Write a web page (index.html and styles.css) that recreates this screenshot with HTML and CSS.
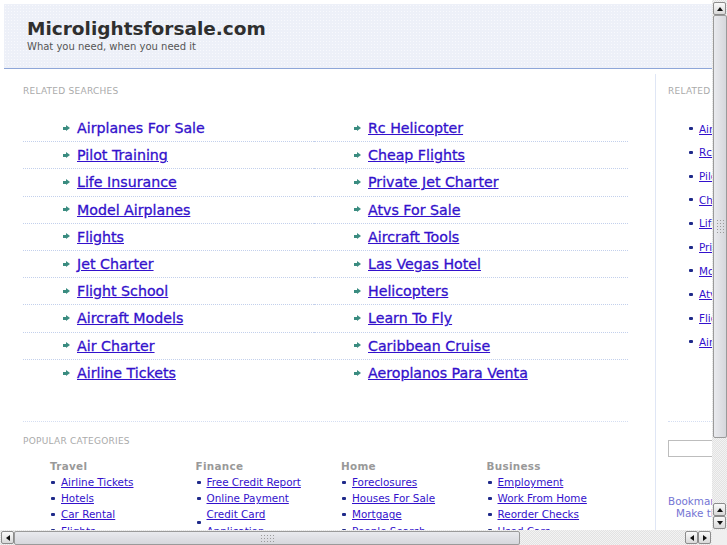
FILE: index.html
```html
<!DOCTYPE html>
<html lang="en">
<head>
  <meta charset="UTF-8" />
  <title>Microlightsforsale.com</title>
  <link rel="stylesheet" href="styles.css">
</head>
<body>
  <div class="page">
    <div class="header">
      <h1>Microlightsforsale.com</h1>
      <p class="tagline">What you need, when you need it</p>
    </div>

    <div class="main">
      <div class="content">
        <h2 class="label">Related Searches</h2>
        <ul class="related">
          <li><span class="arrow"></span><a href="#" class="hover">Airplanes For Sale</a></li>
          <li><span class="arrow"></span><a href="#">Rc Helicopter</a></li>
          <li><span class="arrow"></span><a href="#">Pilot Training</a></li>
          <li><span class="arrow"></span><a href="#">Cheap Flights</a></li>
          <li><span class="arrow"></span><a href="#">Life Insurance</a></li>
          <li><span class="arrow"></span><a href="#">Private Jet Charter</a></li>
          <li><span class="arrow"></span><a href="#">Model Airplanes</a></li>
          <li><span class="arrow"></span><a href="#">Atvs For Sale</a></li>
          <li><span class="arrow"></span><a href="#">Flights</a></li>
          <li><span class="arrow"></span><a href="#">Aircraft Tools</a></li>
          <li><span class="arrow"></span><a href="#">Jet Charter</a></li>
          <li><span class="arrow"></span><a href="#">Las Vegas Hotel</a></li>
          <li><span class="arrow"></span><a href="#">Flight School</a></li>
          <li><span class="arrow"></span><a href="#">Helicopters</a></li>
          <li><span class="arrow"></span><a href="#">Aircraft Models</a></li>
          <li><span class="arrow"></span><a href="#">Learn To Fly</a></li>
          <li><span class="arrow"></span><a href="#">Air Charter</a></li>
          <li><span class="arrow"></span><a href="#">Caribbean Cruise</a></li>
          <li class="last"><span class="arrow"></span><a href="#">Airline Tickets</a></li>
          <li class="last"><span class="arrow"></span><a href="#">Aeroplanos Para Venta</a></li>
        </ul>

        <div class="divider"></div>

        <h2 class="label">Popular Categories</h2>
        <div class="cats">
          <div class="cat">
            <h3>Travel</h3>
            <ul>
              <li><span class="dot"></span><a href="#">Airline Tickets</a></li>
              <li><span class="dot"></span><a href="#">Hotels</a></li>
              <li><span class="dot"></span><a href="#">Car Rental</a></li>
              <li><span class="dot"></span><a href="#">Flights</a></li>
            </ul>
          </div>
          <div class="cat">
            <h3>Finance</h3>
            <ul>
              <li><span class="dot"></span><a href="#">Free Credit Report</a></li>
              <li><span class="dot"></span><a href="#">Online Payment</a></li>
              <li><span class="dot"></span><a href="#">Credit Card Application</a></li>
            </ul>
          </div>
          <div class="cat">
            <h3>Home</h3>
            <ul>
              <li><span class="dot"></span><a href="#">Foreclosures</a></li>
              <li><span class="dot"></span><a href="#">Houses For Sale</a></li>
              <li><span class="dot"></span><a href="#">Mortgage</a></li>
              <li><span class="dot"></span><a href="#">People Search</a></li>
            </ul>
          </div>
          <div class="cat">
            <h3>Business</h3>
            <ul>
              <li><span class="dot"></span><a href="#">Employment</a></li>
              <li><span class="dot"></span><a href="#">Work From Home</a></li>
              <li><span class="dot"></span><a href="#">Reorder Checks</a></li>
              <li><span class="dot"></span><a href="#">Used Cars</a></li>
            </ul>
          </div>
        </div>
      </div>

      <div class="side">
        <h2 class="label">Related Searches</h2>
        <ul class="side-links">
          <li><span class="dot"></span><a href="#">Airplanes For Sale</a></li>
          <li><span class="dot"></span><a href="#">Rc Helicopter</a></li>
          <li><span class="dot"></span><a href="#">Pilot Training</a></li>
          <li><span class="dot"></span><a href="#">Cheap Flights</a></li>
          <li><span class="dot"></span><a href="#">Life Insurance</a></li>
          <li><span class="dot"></span><a href="#">Private Jet Charter</a></li>
          <li><span class="dot"></span><a href="#">Model Airplanes</a></li>
          <li><span class="dot"></span><a href="#">Atvs For Sale</a></li>
          <li><span class="dot"></span><a href="#">Flights</a></li>
          <li><span class="dot"></span><a href="#">Aircraft Tools</a></li>
        </ul>
        <div class="divider"></div>
        <input type="text" class="search">
        <div class="bookmark">
          <span>Bookmark this page</span>
          <span class="indent">Make this your homepage</span>
        </div>
      </div>
    </div>
  </div>

  <!-- fake window scrollbars -->
  <div class="vscroll">
    <div class="btn"><span class="tri up"></span></div>
    <div class="thumb"><span class="grip"></span></div>
    <div class="track"></div>
    <div class="btn"><span class="tri up"></span></div>
    <div class="btn"><span class="tri down"></span></div>
  </div>
  <div class="hscroll">
    <div class="btn"><span class="tri left"></span></div>
    <div class="thumb"><span class="grip"></span></div>
    <div class="track"></div>
    <div class="btn"><span class="tri left"></span></div>
    <div class="btn"><span class="tri right"></span></div>
  </div>
  <div class="corner"></div>
</body>
</html>
```

FILE: styles.css
```css
html, body {
  margin: 0;
  height: 100%;
  overflow: hidden;
  background: #fff;
}
body {
  font-family: "DejaVu Sans", Verdana, sans-serif;
}
.page {
  width: 900px;
}
a {
  color: #3311cc;
}
ul {
  list-style: none;
  margin: 0;
  padding: 0;
}

.header {
  margin: 4px 0 0 4px;
  height: 64px;
  padding-left: 23px;
  background-color: #edf0f8;
  background-image: radial-gradient(circle, #f8f9fd 0.6px, transparent 0.8px);
  background-size: 3px 3px;
  border-bottom: 1px solid #8ea6d8;
}
.header h1 {
  margin: 0;
  padding-top: 14px;
  font-size: 18.5px;
  line-height: 22px;
  font-weight: bold;
  color: #2f2f2f;
}
.tagline {
  margin: 0;
  font-size: 10px;
  line-height: 14px;
  color: #555;
}

.main {
  display: flex;
  margin-top: 5px;
}
.content {
  width: 605px;
  margin-left: 23px;
  margin-right: 27px;
  padding-top: 12px;
}
.label {
  margin: 0;
  font-size: 9px;
  line-height: 11px;
  font-weight: normal;
  letter-spacing: 0.25px;
  text-transform: uppercase;
  color: #aaa;
}

.related {
  display: grid;
  grid-template-columns: 291px 314px;
  margin-top: 18px;
}
.related li {
  display: flex;
  align-items: center;
  height: 27.2px;
  box-sizing: border-box;
  padding-left: 40px;
  border-bottom: 1px dotted #c3d0ec;
  font-size: 14.2px;
}
.related a {
  -webkit-text-stroke: 0.3px #3311cc;
}
.related li.last {
  border-bottom: none;
}
.related a.hover {
  text-decoration: none;
}
.arrow {
  position: relative;
  width: 7px;
  height: 7px;
  margin-right: 7px;
  flex: none;
}
.arrow::before {
  content: "";
  position: absolute;
  left: 0;
  top: 2px;
  width: 4px;
  height: 3px;
  background: #3a8c80;
}
.arrow::after {
  content: "";
  position: absolute;
  left: 3px;
  top: 0;
  border-left: 4px solid #3a8c80;
  border-top: 3.5px solid transparent;
  border-bottom: 3.5px solid transparent;
}

.divider {
  border-top: 1px dotted #d5def2;
}
.content .divider {
  margin-top: 34px;
}
.content .divider + .label {
  margin-top: 14px;
}

.cats {
  display: grid;
  grid-template-columns: repeat(4, 145.5px);
  margin: 13px 0 0 27px;
}
.cat h3 {
  margin: 0 0 1px;
  font-size: 10.4px;
  line-height: 13px;
  font-weight: bold;
  letter-spacing: 0.3px;
  color: #999;
}
.cat ul {
  width: 124px;
}
.cat li {
  display: flex;
  align-items: center;
  font-size: 10.4px;
  line-height: 16.3px;
}
.dot {
  width: 4px;
  height: 3px;
  margin: 0 6px 0 1px;
  flex: none;
  border-radius: 1px;
  background: #1f2a8a;
}

.side {
  flex: none;
  width: 200px;
  padding: 12px 0 0 12px;
  border-left: 1px solid #dfe6f5;
  height: 460px;
}
.side-links {
  margin-top: 20px;
}
.side-links li {
  display: flex;
  align-items: center;
  height: 23.67px;
  padding-left: 21px;
  font-size: 10.4px;
}
.side-links .dot {
  margin: 0 6px 0 0;
}
.side .divider {
  margin-top: 67px;
}
.search {
  display: block;
  margin-top: 18px;
  width: 150px;
  height: 17px;
  box-sizing: border-box;
  border: 1px solid #bdbdbd;
  padding: 0;
}
.bookmark {
  margin-top: 38px;
  font-size: 10.4px;
  line-height: 12px;
  color: #7474d4;
}
.bookmark span {
  display: block;
}
.bookmark .indent {
  padding-left: 8px;
}

/* scrollbars */
.vscroll, .hscroll, .corner {
  position: fixed;
  background: repeating-conic-gradient(#e2e2e2 0 25%, #f3f3f3 0 50%) 0 0 / 2px 2px;
}
.vscroll {
  top: 0;
  right: 0;
  width: 15px;
  height: 530px;
  display: flex;
  flex-direction: column;
  align-items: center;
  padding: 2px 0 1px;
  box-sizing: border-box;
}
.hscroll {
  left: 0;
  bottom: 0;
  width: 712px;
  height: 15px;
  display: flex;
  align-items: center;
  padding: 0 1px;
  box-sizing: border-box;
}
.corner {
  right: 0;
  bottom: 0;
  width: 15px;
  height: 15px;
  background: #efefef;
}
.btn {
  width: 13px;
  height: 13px;
  flex: none;
  box-sizing: border-box;
  border: 1px solid #8c8c8c;
  border-radius: 2px;
  background: linear-gradient(#fafafa, #d9d9d9);
  display: flex;
  align-items: center;
  justify-content: center;
}
.tri {
  width: 0;
  height: 0;
}
.tri.up {
  border-left: 3px solid transparent;
  border-right: 3px solid transparent;
  border-bottom: 4px solid #111;
}
.tri.down {
  border-left: 3px solid transparent;
  border-right: 3px solid transparent;
  border-top: 4px solid #111;
}
.tri.left {
  border-top: 3px solid transparent;
  border-bottom: 3px solid transparent;
  border-right: 4px solid #111;
}
.tri.right {
  border-top: 3px solid transparent;
  border-bottom: 3px solid transparent;
  border-left: 4px solid #111;
}
.thumb {
  flex: none;
  box-sizing: border-box;
  border: 1px solid #9a9a9a;
  border-radius: 2px;
  display: flex;
  align-items: center;
  justify-content: center;
}
.vscroll .thumb {
  width: 14px;
  height: 423px;
  margin-left: 1px;
  background: linear-gradient(90deg, #e9eaee, #d6d7dc);
}
.hscroll .thumb {
  width: 506px;
  height: 14px;
  margin-top: 1px;
  background: linear-gradient(#e9eaee, #d6d7dc);
}
.grip {
  background: radial-gradient(circle, #9a9a9a 0.6px, transparent 0.9px) 0 0 / 3px 3px;
}
.vscroll .grip {
  width: 9px;
  height: 15px;
}
.hscroll .grip {
  width: 15px;
  height: 9px;
}
.track {
  flex: 1;
}
```
